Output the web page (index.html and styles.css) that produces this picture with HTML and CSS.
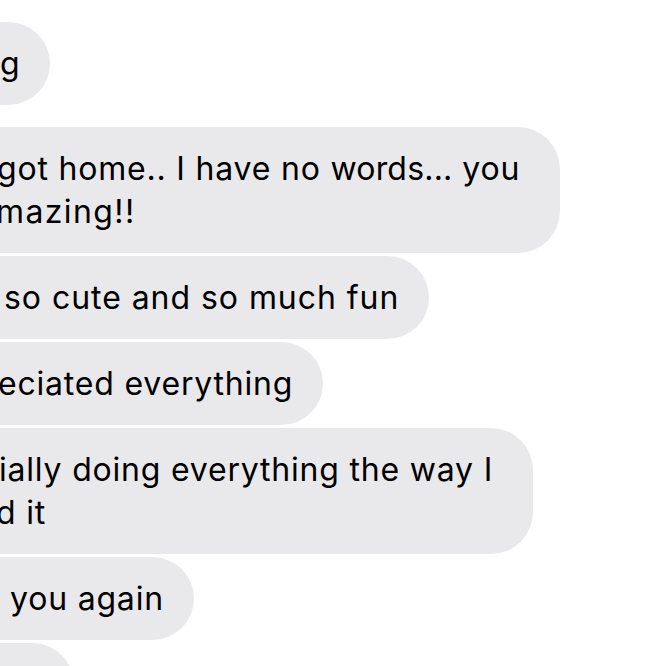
FILE: index.html
```html
<!DOCTYPE html>
<html>
<head>
<meta charset="utf-8">
<link rel="stylesheet" href="styles.css">
</head>
<body>
<div class="thread">
  <div class="bubble b1"><span class="line">g</span></div>
  <div class="bubble b2 wrap group"><span class="line l-got">got home.. I have no <span class="tight">words...</span> you</span><span class="line l-mazing">mazing!!</span></div>
  <div class="bubble b3"><span class="line l-so">so cute and so much fun</span></div>
  <div class="bubble b4"><span class="line l-eci">eciated everything</span></div>
  <div class="bubble b5 wrap"><span class="line l-ially">ially doing everything the way I</span><span class="line l-dit">d it</span></div>
  <div class="bubble b6"><span class="line l-you">you again</span></div>
  <div class="bubble b7"><span class="line">xo</span></div>
</div>
</body>
</html>
```
FILE: styles.css
```css
html, body {
  margin: 0;
  padding: 0;
  background: #ffffff;
}
body {
  width: 666px;
  height: 666px;
  overflow: hidden;
  font-family: Inter, "Liberation Sans", Arial, sans-serif;
  font-size: 32px;
  line-height: 43px;
  color: #000000;
}
.thread {
  display: flex;
  flex-direction: column;
  align-items: flex-start;
  gap: 3px;
  padding-top: 22px;
  margin-left: -60px;
}
.bubble {
  background: #e9e9eb;
  border-radius: 42px;
  padding: 20px 30px 20px 60px;
  letter-spacing: 0.8px;
  white-space: nowrap;
}
.wrap { padding-right: 40px; }
.group { margin-top: 19px; }
.line { display: block; }
.tight { letter-spacing: 0.2px; }
.l-got { margin-left: -3px; }
.l-mazing { margin-left: -4px; letter-spacing: 1.4px; }
.l-so { margin-left: 4px; letter-spacing: 0.95px; }
.l-eci { margin-left: -2px; }
.l-ially { margin-left: -1px; }
.l-dit { margin-left: -4px; }
.l-you { margin-left: 10px; }
.b7 { padding-right: 36px; }
```
